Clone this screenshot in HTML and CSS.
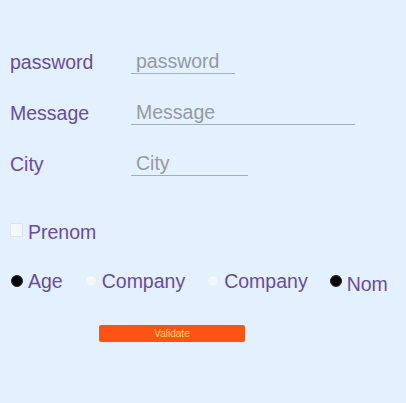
FILE: index.html
```html
<!DOCTYPE html>
<html>
<head>
<meta charset="utf-8">
<link rel="stylesheet" href="styles.css">
</head>
<body>
<form class="form">
  <div class="field">
    <label class="label">password</label>
    <input class="input w-pass" type="password" placeholder="password">
  </div>
  <div class="field">
    <label class="label">Message</label>
    <input class="input w-msg" type="text" placeholder="Message">
  </div>
  <div class="field">
    <label class="label">City</label>
    <input class="input w-city" type="text" placeholder="City">
  </div>
  <div class="check-row">
    <input class="check" type="checkbox">
    <span class="opt">Prenom</span>
  </div>
  <div class="radio-row">
    <label class="radio-item"><input class="radio" type="radio" name="a" checked><span class="opt">Age</span></label>
    <label class="radio-item"><input class="radio" type="radio" name="b"><span class="opt">Company</span></label>
    <label class="radio-item"><input class="radio" type="radio" name="c"><span class="opt">Company</span></label>
    <label class="radio-item nom"><input class="radio" type="radio" name="d" checked><span class="opt">Nom</span></label>
  </div>
  <div class="actions">
    <button class="btn" type="button">Validate</button>
  </div>
</form>
</body>
</html>
```

FILE: styles.css
```css
html, body {
  margin: 0;
  padding: 0;
  background: #e3f0fd;
  height: 100%;
}
body {
  font-family: "Liberation Sans", Arial, sans-serif;
  color: #6a4c9c;
}
.form {
  padding: 48px 0 0 10px;
  display: flex;
  flex-direction: column;
}
.field {
  display: flex;
  align-items: flex-end;
  height: 26px;
  margin-bottom: 25px;
}
.label {
  width: 121px;
  font-size: 19.5px;
  line-height: 24px;
}
.input {
  font-family: "Liberation Sans", Arial, sans-serif;
  font-size: 19.5px;
  line-height: 24px;
  height: 25px;
  padding: 0 0 0 5px;
  margin: 0;
  border: none;
  border-bottom: 1px solid #a3aebb;
  background: transparent;
  color: #8a8f98;
  box-sizing: border-box;
  outline: none;
}
.input::placeholder {
  color: #969aa2;
}
.w-pass { width: 104px; }
.w-msg { width: 224px; }
.w-city { width: 117px; }
.check-row {
  display: flex;
  align-items: center;
  margin-top: 19px;
  height: 24px;
}
.check {
  appearance: none;
  -webkit-appearance: none;
  width: 13px;
  height: 14px;
  margin: -4px 5px 0 0;
  background: #f3f7fb;
  border: 1px solid #dfe4ea;
  box-sizing: border-box;
}
.opt {
  font-size: 19.5px;
  line-height: 24px;
}
.radio-row {
  display: flex;
  align-items: center;
  margin-top: 25px;
  height: 24px;
}
.radio-item {
  display: flex;
  align-items: center;
}
.radio-item + .radio-item { margin-left: 21px; }
.radio-item.nom .opt { position: relative; top: 3px; }
.radio {
  appearance: none;
  -webkit-appearance: none;
  width: 12px;
  height: 12px;
  border-radius: 50%;
  margin: 0 5px 0 1px;
  background: #f3f7fb;
  border: 1px solid #e8eef5;
  box-sizing: border-box;
}
.radio:checked {
  background: #000;
  border-color: #2a2a2a;
}
.actions {
  display: flex;
  padding-left: 89px;
  margin-top: 32px;
}
.btn {
  width: 146px;
  height: 17px;
  padding: 0;
  border: none;
  border-radius: 2px;
  background: #ff5315;
  color: #ffd86a;
  font-family: "Liberation Sans", Arial, sans-serif;
  font-size: 10px;
  line-height: 17px;
}
```
